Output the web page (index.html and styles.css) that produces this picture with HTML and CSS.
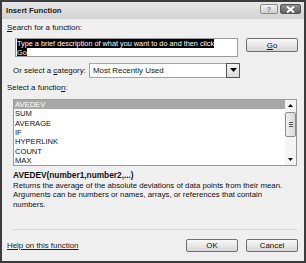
FILE: index.html
```html
<!DOCTYPE html>
<html>
<head>
<meta charset="utf-8">
<link rel="stylesheet" href="styles.css">
</head>
<body>
<div class="dialog">
  <div class="titlebar">
    <span class="title">Insert Function</span>
    <div class="tbtns">
      <span class="tbtn help">?</span>
      <span class="tbtn close">
        <svg width="9" height="7" viewBox="0 0 9 7"><path d="M1 0.5 L8 6.5 M8 0.5 L1 6.5" stroke="#fff" stroke-width="2"/></svg>
      </span>
    </div>
  </div>
  <div class="body">
    <div class="label l1"><u>S</u>earch for a function:</div>
    <div class="searchrow">
      <div class="search"><span class="sel">Type a brief description of what you want to do and then click<br>Go</span></div>
      <div class="btn go"><u>G</u>o</div>
    </div>
    <div class="catrow">
      <span class="catlabel">Or select a <u>c</u>ategory:</span>
      <div class="combo">
        <span class="comboval">Most Recently Used</span>
        <span class="arrow"><svg width="7" height="4" viewBox="0 0 7 4"><path d="M0 0 H7 L3.5 4 Z" fill="#000"/></svg></span>
      </div>
    </div>
    <div class="label l2">Select a functio<u>n</u>:</div>
    <div class="listbox">
      <div class="items">
        <div class="item selected">AVEDEV</div>
        <div class="item">SUM</div>
        <div class="item">AVERAGE</div>
        <div class="item">IF</div>
        <div class="item">HYPERLINK</div>
        <div class="item">COUNT</div>
        <div class="item">MAX</div>
      </div>
      <div class="scrollbar">
        <div class="sbarrow"><svg width="5" height="3" viewBox="0 0 5 3"><path d="M0 3 H5 L2.5 0 Z" fill="#000"/></svg></div>
        <div class="thumb"><span class="grip"></span></div>
        <div class="sbfill"></div>
        <div class="sbarrow"><svg width="5" height="3" viewBox="0 0 5 3"><path d="M0 0 H5 L2.5 3 Z" fill="#000"/></svg></div>
      </div>
    </div>
    <div class="sig">AVEDEV(number1,number2,...)</div>
    <div class="desc">Returns the average of the absolute deviations of data points from their mean.<br>Arguments can be numbers or names, arrays, or references that contain<br>numbers.</div>
    <div class="sep"></div>
    <div class="footer">
      <span class="helplink">Help on this function</span>
      <div class="btns">
        <div class="btn ok">OK</div>
        <div class="btn cancel">Cancel</div>
      </div>
    </div>
  </div>
</div>
</body>
</html>
```
FILE: styles.css
```css
html, body {
  margin: 0;
  padding: 0;
  background: #ffffff;
}
.dialog {
  box-sizing: border-box;
  width: 306px;
  height: 263px;
  border: 2px solid #3c3c3c;
  background: #efefef;
  font-family: "Liberation Sans", Arial, sans-serif;
  font-size: 7.9px;
  color: #111;
  display: flex;
  flex-direction: column;
}
.titlebar {
  height: 17px;
  flex: none;
  background: linear-gradient(#e6e6e6, #d2d2d2);
  display: flex;
  align-items: center;
  justify-content: space-between;
  padding: 0 3px 0 4px;
}
.title {
  font-weight: bold;
  font-size: 7.7px;
  color: #222;
}
.tbtns {
  display: flex;
  gap: 2px;
  margin-top: -3px;
}
.tbtn {
  box-sizing: border-box;
  height: 10px;
  border: 1px solid #8a8a8a;
  border-radius: 2px;
  display: flex;
  align-items: center;
  justify-content: center;
}
.tbtn.help {
  width: 18px;
  background: linear-gradient(#f2f2f2, #d0d0d0);
  color: #777;
  font-size: 7px;
  font-weight: bold;
}
.tbtn.close {
  width: 21px;
  background: linear-gradient(#8e8e8e, #5e5e5e);
  border-color: #555;
}
.body {
  flex: 1;
  padding: 0 6px 0 5px;
  display: flex;
  flex-direction: column;
}
.label {
  line-height: 10px;
  height: 10px;
}
.l1 { margin-top: 4px; }
.searchrow {
  margin-top: 5px;
  display: flex;
  align-items: flex-start;
  padding-left: 8px;
}
.search {
  box-sizing: border-box;
  width: 223px;
  height: 19px;
  background: #fff;
  border: 1px solid #9a9a9a;
  padding: 0 4px 0 1px;
  line-height: 9px;
  font-size: 7.3px;
  white-space: nowrap;
  overflow: hidden;
}
.sel {
  background: #000;
  color: #fff;
}
.btn {
  box-sizing: border-box;
  height: 14px;
  border: 1px solid #707070;
  border-radius: 2px;
  background: linear-gradient(#f8f8f8 0%, #e8e8e8 50%, #d6d6d6 100%);
  display: flex;
  align-items: center;
  justify-content: center;
  color: #111;
}
.go {
  width: 52px;
  margin-left: 8px;
}
.catrow {
  margin-top: 6px;
  display: flex;
  align-items: center;
  height: 14px;
  padding-left: 6px;
}
.catlabel {
  width: 76px;
  white-space: nowrap;
}
.combo {
  box-sizing: border-box;
  width: 151px;
  height: 15px;
  background: #fff;
  border: 1px solid #a5a5a5;
  display: flex;
  align-items: center;
  justify-content: space-between;
  padding-left: 3px;
}
.arrow {
  box-sizing: border-box;
  width: 14px;
  height: 15px;
  margin-right: -1px;
  border: 1px solid #555;
  background: linear-gradient(#f4f4f4, #dadada);
  display: flex;
  align-items: center;
  justify-content: center;
}
.l2 { margin-top: 6px; }
.listbox {
  box-sizing: border-box;
  margin-top: 6px;
  margin-left: 6px;
  width: 284px;
  height: 67px;
  border: 1px solid #9a9a9a;
  background: #fff;
  display: flex;
}
.items {
  flex: 1;
}
.item {
  height: 9.33px;
  line-height: 9.33px;
  padding-left: 1px;
  font-size: 7.6px;
}
.item.selected {
  background: #a8a8a8;
  color: #fff;
}
.scrollbar {
  width: 11px;
  background: #f4f4f4;
  display: flex;
  flex-direction: column;
  align-items: stretch;
}
.sbarrow {
  height: 11px;
  display: flex;
  align-items: center;
  justify-content: center;
}
.thumb {
  box-sizing: border-box;
  height: 25px;
  margin: 1px 0;
  border: 1px solid #8c8c8c;
  border-radius: 2px;
  background: linear-gradient(90deg, #f0f0f0, #d8d8d8);
  display: flex;
  align-items: center;
  justify-content: center;
}
.grip {
  width: 4px;
  height: 5px;
  background: repeating-linear-gradient(#555 0 1px, transparent 1px 2px);
}
.sbfill { flex: 1; }
.sig {
  margin-top: 4px;
  margin-left: 6px;
  font-weight: bold;
  font-size: 8.3px;
  line-height: 10px;
}
.desc {
  margin-left: 6px;
  line-height: 9.5px;
  margin-top: 0.5px;
  font-size: 7.8px;
  white-space: nowrap;
}
.sep {
  margin-top: 20px;
  margin-left: 6px;
  height: 1px;
  width: 284px;
  background: #d6d6d6;
}
.footer {
  margin-top: 9px;
  display: flex;
  align-items: center;
  justify-content: space-between;
}
.helplink {
  text-decoration: underline;
  color: #222;
}
.btns {
  display: flex;
  gap: 8px;
}
.ok, .cancel {
  width: 52px;
  height: 13px;
}
```
